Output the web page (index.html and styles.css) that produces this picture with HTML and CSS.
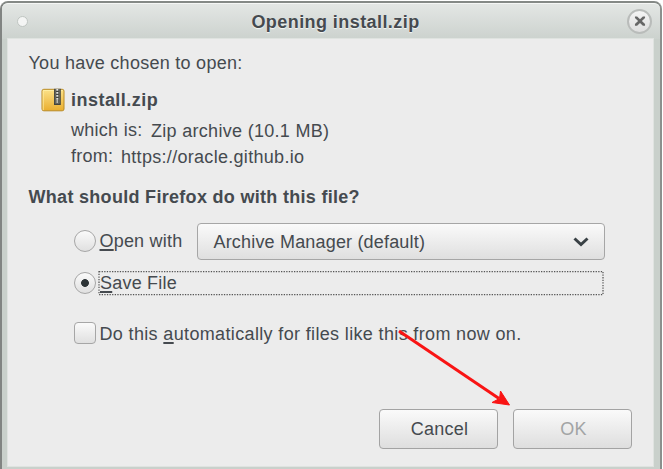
FILE: index.html
```html
<!DOCTYPE html>
<html lang="en">
<head>
<meta charset="utf-8">
<title>Opening install.zip</title>
<link rel="stylesheet" href="styles.css">
</head>
<body>
<div class="window">
  <header class="titlebar">
    <span class="menu-dot"></span>
    <h1 class="title">Opening install.zip</h1>
    <button class="close" aria-label="Close">
      <svg width="12" height="12" viewBox="0 0 10 10"><path d="M0.8 1.2H2.6L5 3.5L7.4 1.2H9.2V2.4L6.6 5L9.2 7.6V8.9H7.4L5 6.6L2.6 8.9H0.8V7.6L3.4 5L0.8 2.4Z" fill="#666"/></svg>
    </button>
  </header>
  <main class="content">
    <p class="intro">You have chosen to open:</p>
    <div class="file">
      <svg class="zip" width="24" height="24" viewBox="0 0 24 24">
        <defs><linearGradient id="gold" x1="0" y1="0" x2="0" y2="1"><stop offset="0" stop-color="#fce28a"/><stop offset="1" stop-color="#eaae2e"/></linearGradient></defs>
        <rect x="1" y="1.3" width="22" height="21.5" rx="1.8" fill="url(#gold)" stroke="#b98b25" stroke-width="1"/>
        <path d="M2.2 22V2.5H21.8" fill="none" stroke="#fff0a8" stroke-width=".8"/>
        <path d="M13 .8h6.8v16.2H13z" fill="#42443e"/>
        <path d="M14.3 1v14.3h4V1" fill="none" stroke="#77776d" stroke-width=".8"/>
        <path d="M16.3 1v11" stroke="#e4e4df" stroke-width="2" stroke-dasharray="1.7 1.3"/>
        <path d="M15.4 12h1.8v3h-1.8z" fill="#bbbcb3"/>
      </svg>
      <strong class="filename">install.zip</strong>
    </div>
    <dl class="details">
      <div class="detail"><dt class="kind">which is:</dt><dd>Zip archive (10.1 MB)</dd></div>
      <div class="detail"><dt class="source">from:</dt><dd>https://oracle.github.io</dd></div>
    </dl>
    <h2 class="question">What should Firefox do with this file?</h2>
    <div class="option open">
      <span class="radio"></span><span class="label open-label"><u>O</u>pen with</span>
      <div class="select"><span>Archive Manager (default)</span>
        <svg width="16" height="12" viewBox="0 0 16 12"><path d="M1.5 2.5L8 8.5L14.5 2.5" fill="none" stroke="#394145" stroke-width="3"/></svg>
      </div>
    </div>
    <div class="option save">
      <span class="radio checked"></span>
      <div class="focus"><span class="label"><u>S</u>ave File</span>
        <svg class="ring" width="506" height="26"><rect x="1" y="1.5" width="504" height="23" fill="none" stroke="#555" stroke-width="1.25" stroke-dasharray="1.3 1.3"/></svg>
      </div>
    </div>
    <div class="option auto">
      <span class="checkbox"></span><span class="label auto-label">Do this <u>a</u>utomatically for files like this from now on.</span>
    </div>
    <footer class="actions">
      <button class="btn">Cancel</button>
      <button class="btn" disabled>OK</button>
    </footer>
  </main>
  <svg class="arrow" width="120" height="85" viewBox="0 0 120 85"><path d="M4 5L104 72.5" stroke="#f91414" stroke-width="3" fill="none"/><path d="M114.5 79L97 76.5L104.5 72.5L105.500 65Z" fill="#f91414" stroke="#f91414"/></svg>
</div>
</body>
</html>
```
FILE: styles.css
```css
* { box-sizing: border-box; }
body {
  margin: 0;
  height: 469px;
  overflow: hidden;
  background: #fff;
  font: 18px/22px "Liberation Sans", Arial, sans-serif;
  letter-spacing: .27px;
  color: #454a4f;
}
h1, h2, p, dl, dd { margin: 0; }
button { font: inherit; color: inherit; letter-spacing: inherit; padding: 0; }
.window {
  position: relative;
  width: 662px;
  height: 480px;
  margin-top: 1px;
  padding: 0 7px 0 6px;
  border: 2px solid #858986;
  border-left-color: #818482;
  border-right-color: #8b908d;
  border-radius: 8px 8px 0 0;
  background: #c9d0cb;
}
.titlebar {
  display: flex;
  align-items: center;
  justify-content: space-between;
  height: 36px;
  margin: 0 -7px 0 -6px;
  padding: 0 8px 1px 15px;
  border-top: 1px solid #f5f6f5;
  border-radius: 6px 6px 0 0;
  background: linear-gradient(#e3e6e4, #ccd2ce);
}
.menu-dot {
  width: 11px;
  height: 11px;
  border: 1px solid #bfc5c1;
  border-radius: 50%;
  background: #f4f5f4;
}
.title {
  font-size: 18px;
  line-height: 22px;
  letter-spacing: .43px;
  margin: 1px 0 0 16px;
  text-shadow: 0 1px 1px #f5f7f5;
}
.close {
  display: grid;
  place-items: center;
  width: 25px;
  height: 25px;
  border: 2px solid #b9bcba;
  border-radius: 50%;
  background: linear-gradient(#f4f4f4, #dedede);
}
.content {
  height: 427px;
  padding: 13px 22px 0 20.5px;
  background: #ececec;
  box-shadow: 0 0 0 1px #dfe3e0;
}
.intro { height: 22px; }
.file { display: flex; height: 24px; margin: 14px 0 0 12px; }
.filename { margin: 1px 0 0 6.5px; letter-spacing: .47px; }
.details { margin: 7px 0 0 42.5px; }
.detail { display: flex; height: 25.5px; }
.kind { width: 80px; }
.source { width: 50px; }
.detail dd { margin-top: 1px; letter-spacing: .3px; }
.question {
  font-size: 18px;
  line-height: 22px;
  letter-spacing: .3px;
  margin-top: 16px;
}
.option { display: flex; align-items: center; margin-left: 45px; }
.open { height: 38px; margin-top: 14px; }
.radio, .checkbox {
  flex: none;
  width: 22px;
  height: 22px;
  border: 1.5px solid #a6a6a6;
  background: linear-gradient(#fafafa, #e0e0e0);
}
.radio { border-radius: 50%; }
.radio.checked { background: radial-gradient(circle, #2d3437 3.5px, transparent 4.3px), linear-gradient(#fafafa, #e0e0e0); }
.checkbox { border-radius: 4px; }
.label { margin-left: 4px; white-space: nowrap; letter-spacing: .2px; }
.label.auto-label { letter-spacing: .35px; }
u { text-decoration-thickness: 1.5px; text-underline-offset: 2px; text-decoration-skip-ink: none; }
.open-label { width: 97px; }
.select {
  display: flex;
  align-items: center;
  justify-content: space-between;
  width: 408px;
  height: 37px;
  margin-top: 1px;
  padding: 0 15px 0 16px;
  border: 1.5px solid #a6a6a6;
  border-radius: 4px;
  background: linear-gradient(#fafafa, #dfdfdf);
  letter-spacing: .18px;
}
.save { height: 26px; margin-top: 10px; }
.focus { position: relative; width: 506px; height: 26px; margin-left: 2.5px; }
.focus .label { display: block; margin: 2px 0 0 2px; }
.ring { position: absolute; left: 0; top: 0; }
.auto { height: 24px; margin-top: 25px; }
.auto-label { margin-top: 2px; }
.actions { display: flex; gap: 15px; margin: 64px 0 0 350px; }
.btn {
  width: 119px;
  height: 40px;
  flex: none;
  border: 1.5px solid #a3a3a3;
  border-radius: 4px;
  background: linear-gradient(#fafafa, #dedede);
  padding-left: 3px;
}
.btn:disabled { color: #a2a4a5; }
.arrow { position: absolute; left: 393px; top: 323px; }
```
